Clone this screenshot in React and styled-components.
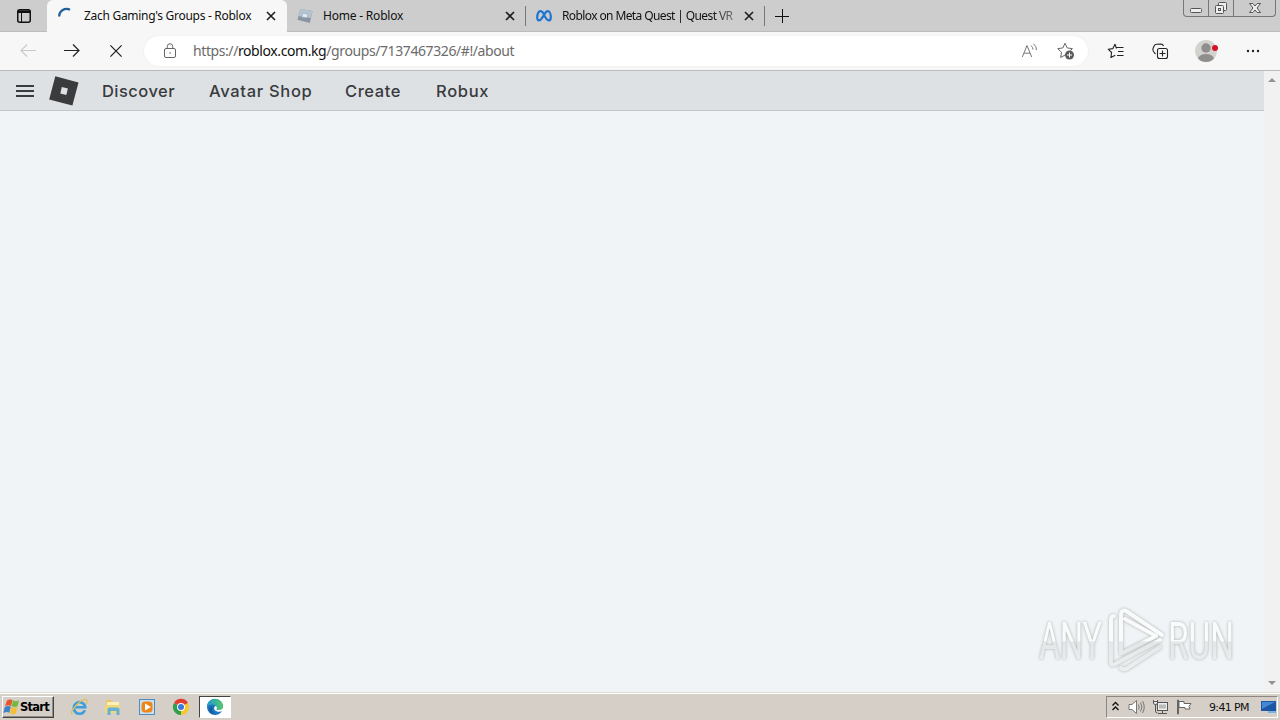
import React from 'react';
import styled, { createGlobalStyle } from 'styled-components';

const tabs = [
  { id: 'groups', title: "Zach Gaming's Groups - Roblox", icon: 'spinner', active: true, spacing: '-0.29px' },
  { id: 'home', title: 'Home - Roblox', icon: 'roblox', spacing: '-0.2px' },
  { id: 'meta', title: 'Roblox on Meta Quest | Quest VR', icon: 'meta', faded: true, spacing: '-0.61px' },
];

const navLinks = [
  { label: 'Discover', width: 107, spacing: '0.45px' },
  { label: 'Avatar Shop', width: 136, spacing: '0.68px' },
  { label: 'Create', width: 91, spacing: '0.6px' },
  { label: 'Robux', width: 60, spacing: '0.7px' },
];

const TabIcon = ({ name }) => {
  if (name === 'spinner') {
    return (
      <svg width="16" height="16" viewBox="0 0 16 16" fill="none">
        <path d="M1.2 8.500A7.500 7.500 0 0 1 12 1.700" stroke="#1f5f9c" strokeWidth="2.300" />
      </svg>
    );
  }
  if (name === 'roblox') {
    return (
      <svg width="16" height="16" viewBox="0 0 16 16">
        <path d="M3.4 1 15.6 3 12.8 15 .5 11.8Z" fill="#8795a4" />
        <path d="M3.4 1 15.6 3 13.8 10 1.500 8Z" fill="#b4c3d1" />
        <path d="M6 5.3 11 6.2 10 9.8 4.8 8.9Z" fill="#e4eaf0" stroke="#9dabb8" strokeWidth=".6" />
      </svg>
    );
  }
  return (
    <svg width="16" height="16" viewBox="0 0 16 16" fill="none">
      <path
        d="M8 6.1C6.9 4.2 5.8 3.1 4.4 3.1 2.600 3.100 1.200 6 1.200 9.300c0 2 .7 3.100 1.900 3.100C4.700 12.400 5.700 11 8 6.900 9.500 4.300 10.400 3.100 11.700 3.100c1.800 0 3.100 2.900 3.100 6.200 0 2-.7 3.100-1.900 3.100-1.700 0-2.700-1.400-4.900-5.500"
        stroke="#1f74d2"
        strokeWidth="2.200"
      />
    </svg>
  );
};

const Cross = ({ size, width }) => (
  <svg width={size} height={size} viewBox="0 0 10 10" fill="none">
    <path d="m1 1 8 8M9 1 1 9" stroke="#1c1c1c" strokeWidth={width} />
  </svg>
);

const BrowserTabs = () => (
  <TabStrip>
    <TabActions>
      <svg width="14" height="14" viewBox="0 0 14 14" fill="none" stroke="#111">
        <rect x=".75" y=".75" width="12.5" height="12.5" rx="2" strokeWidth="1.5" />
        <path d="M1 2.700h12" strokeWidth="2.600" />
        <path d="M4.500 3v10" strokeWidth="1" />
      </svg>
    </TabActions>
    {tabs.map((tab) => (
      <Tab key={tab.id} $active={tab.active}>
        <TabIcon name={tab.icon} />
        <TabTitle $faded={tab.faded} $spacing={tab.spacing}>{tab.title}</TabTitle>
        <Cross size={10} width={1.6} />
      </Tab>
    ))}
    <NewTab>
      <svg width="14" height="14" viewBox="0 0 14 14" stroke="#111" strokeWidth="1">
        <path d="M7.500 0v14M0 7.500h14" />
      </svg>
    </NewTab>
    <WindowButtons>
      <WindowButton $width={26}>
        <svg width="12" height="16" viewBox="0 0 12 16" fill="#eee" stroke="#555">
          <rect x=".5" y="8.500" width="11" height="4" rx="1" />
        </svg>
      </WindowButton>
      <WindowButton $width={25}>
        <svg width="14" height="16" viewBox="0 0 14 16" fill="#eee" stroke="#555">
          <rect x="4.500" y="2.500" width="8" height="8" rx="1" />
          <rect x="1.500" y="5.500" width="8" height="8" rx="1" />
          <rect x="4.500" y="8.500" width="2" height="2" />
        </svg>
      </WindowButton>
      <WindowButton $width={42}>
        <svg width="14" height="16" viewBox="0 0 14 16" fill="#eee" stroke="#555">
          <path d="M1.500 3.500h3.300L7 6l2.200-2.500h3.300L9 8l3.500 4.500H9.200L7 10l-2.200 2.500H1.500L5 8Z" />
        </svg>
      </WindowButton>
    </WindowButtons>
  </TabStrip>
);

const Toolbar = () => (
  <ToolbarRow>
    <ToolButton $color="#c9c9c9">
      <svg width="16" height="14" viewBox="0 0 16 14" fill="none" stroke="currentColor" strokeWidth="1.100">
        <path d="M16 6.500H1M7 .5l-6 6 6 6" />
      </svg>
    </ToolButton>
    <ToolButton>
      <svg width="16" height="14" viewBox="0 0 16 14" fill="none" stroke="currentColor" strokeWidth="1.200">
        <path d="M0 6.500h15M9 .5l6 6-6 6" />
      </svg>
    </ToolButton>
    <ToolButton>
      <Cross size={14} width={0.85} />
    </ToolButton>
    <AddressBar>
      <svg width="14" height="16" viewBox="0 0 14 16" fill="none" stroke="#666">
        <rect x="1.500" y="5.500" width="11" height="9" rx="1.500" />
        <path d="M4.250 5.500V3.500a2.750 2.750 0 0 1 5.500 0v2" />
        <circle cx="7" cy="10" r=".8" fill="#666" stroke="none" />
      </svg>
      <Url>https://<b>roblox.com.kg</b>/groups/7137467326/#!/about</Url>
      <AddressIcons>
        <svg width="17" height="16" viewBox="0 0 17 16" fill="none" stroke="#777">
          <path d="M1.300 14 6 2.500 10.700 14M2.900 10.200h6.200M10 2.600q2 1.700 2 4M12.500.8q3 2.300 3 6.300" />
        </svg>
        <svg width="18" height="18" viewBox="0 0 18 18" fill="none" stroke="#666">
          <path d="M8 13 3.700 15.500 4.500 10.300.7 6.700l5.200-.8L8 1.200l2.200 4.700 5.200.8-2.200 2" strokeLinejoin="round" />
          <circle cx="12.500" cy="13" r="4.500" fill="#5b5b5b" stroke="none" />
          <path d="M12.500 10.500v5M10 13h5" stroke="#fff" />
        </svg>
      </AddressIcons>
    </AddressBar>
    <BrowserIcons>
      <svg width="18" height="16" viewBox="0 0 18 16" fill="none" stroke="#222" strokeWidth="1.100">
        <path d="M9.500 5.500 8 1.300 5.900 5.600 1.200 6.200 4.600 9.500 3.900 14.500 8.300 12.200M9.500 4.500h7M11 8.500h5.500M10 12.500h6.500" strokeLinejoin="round" />
      </svg>
      <svg width="17" height="17" viewBox="0 0 17 17" fill="none" stroke="#222" strokeWidth="1.100">
        <path d="M3.500 11.200 1.500 8.500Q.5 7 1 5.500L2.300 2.600Q3 1.500 4.500 1.300L9 1q1.800 0 2.500 2" />
        <rect x="5.500" y="5.500" width="10" height="10" rx="2" />
        <path d="M10.500 7.500v6M7.500 10.500h6" />
      </svg>
      <svg width="24" height="22" viewBox="0 0 24 22">
        <defs>
          <clipPath id="avatar"><circle cx="11" cy="11" r="11" /></clipPath>
        </defs>
        <g clipPath="url(#avatar)">
          <rect width="22" height="22" fill="#d3d2cf" />
          <circle cx="11" cy="8" r="4.700" fill="#908e8c" />
          <ellipse cx="11" cy="19" rx="8" ry="5" fill="#908e8c" />
        </g>
        <circle cx="20" cy="8" r="3" fill="#d81324" />
      </svg>
      <svg width="14" height="4" viewBox="0 0 14 4" fill="#222">
        <circle cx="2" cy="2" r="1.200" /><circle cx="7" cy="2" r="1.200" /><circle cx="12" cy="2" r="1.200" />
      </svg>
    </BrowserIcons>
  </ToolbarRow>
);

const SiteHeader = () => (
  <Header>
    <svg width="18" height="14" viewBox="0 0 18 14" stroke="#393b3d" strokeWidth="1.800">
      <path d="M0 2h18M0 7h18M0 12h18" />
    </svg>
    <Logo>
      <svg width="30" height="30" viewBox="0 0 30 30">
        <path fillRule="evenodd" d="M6.300.3 29.500 6.500 23.400 29.600.2 23.400ZM12.800 11.100 11.300 17.500 17.300 19.100 18.900 12.600Z" fill="#393b3d" />
      </svg>
    </Logo>
    {navLinks.map((link) => (
      <NavLink key={link.label} $width={link.width} $spacing={link.spacing}>{link.label}</NavLink>
    ))}
  </Header>
);

const Watermark = () => (
  <WatermarkBox>
    <svg width="210" height="76" viewBox="0 0 210 76">
      <defs>
        <linearGradient id="shine" gradientUnits="userSpaceOnUse" x1="0" y1="14" x2="0" y2="62">
          <stop offset="0" stopColor="#f8fafa" />
          <stop offset=".54" stopColor="#fbfcfc" />
          <stop offset=".56" stopColor="#e4e7e7" />
          <stop offset="1" stopColor="#ebeeee" />
        </linearGradient>
      </defs>
      <g fill="url(#shine)" fontFamily="Roboto, sans-serif" fontSize="51">
        <text x="7" y="57.500" textLength="63" lengthAdjust="spacingAndGlyphs">ANY</text>
        <text x="136" y="57.500" textLength="66" lengthAdjust="spacingAndGlyphs">RUN</text>
      </g>
      <g fill="none" stroke="url(#shine)" strokeWidth="4" strokeLinecap="round" strokeLinejoin="round">
        <path d="M82 15q-3 0-3 4v42q0 4 4 2L128 39" />
        <path d="M130 34 95 10.500q-6-3-6 4v38L124 35 93 18" />
        <path d="M89 67q2 2 5 1l34-22" />
      </g>
    </svg>
  </WatermarkBox>
);

const launchers = [
  <svg key="ie" width="18" height="18" viewBox="0 0 18 18" fill="none">
    <path d="M14.900 12.200A5.800 5.800 0 1 1 15.300 9.300H5" stroke="#3a9fdc" strokeWidth="2.600" />
    <path d="M2 16.500C-.5 13 12.500-1 16.800 2q1 1-.6 4" stroke="#e0c05a" strokeWidth="1.300" />
  </svg>,
  <svg key="files" width="18" height="18" viewBox="0 0 18 18">
    <path d="M2 2h5l1 2h7v10H2Z" fill="#e7c766" />
    <path d="M3 4h12v6H3Z" fill="#fcf1b2" />
    <path d="M1 7h15v8H1Z" fill="#efd77b" />
    <path d="M3.500 17v-5.500q0-2 2-2h8q2 0 2 2V17h-3v-4h-6v4Z" fill="#68afd7" />
  </svg>,
  <svg key="media" width="18" height="18" viewBox="0 0 18 18">
    <rect x="1.500" y="1.500" width="15" height="15" fill="#c6e1f3" stroke="#538cba" />
    <rect x="3.500" y="3.500" width="11" height="11" rx="3.500" fill="#ef8517" />
    <path d="m7 5.500 6 3.500-6 3.500Z" fill="#fff" />
  </svg>,
  <svg key="chrome" width="18" height="18" viewBox="0 0 18 18">
    <path d="M9 9 2 5a8 8 0 0 1 14 0Z" fill="#df3e30" />
    <path d="M9 9 16 5A8 8 0 0 1 9 17Z" fill="#f7c72e" />
    <path d="M9 9v8A8 8 0 0 1 2 5Z" fill="#2f9e4d" />
    <circle cx="9" cy="9" r="4" fill="#fff" />
    <circle cx="9" cy="9" r="3" fill="#3979dc" />
  </svg>,
];

const EdgeIcon = () => (
  <svg width="18" height="18" viewBox="0 0 18 18">
    <defs>
      <linearGradient id="edge" x1="0" x2="1">
        <stop stopColor="#2196d8" />
        <stop offset="1" stopColor="#55ca63" />
      </linearGradient>
    </defs>
    <circle cx="9" cy="9" r="8" fill="#1976bf" />
    <path d="M1 9a8 8 0 0 1 16-.5c0 2.500-2 3.700-4.500 3.500-2.500 0-1.500-1.500-1.700-3C10.200 6.500 4.500 5 1 9Z" fill="url(#edge)" />
    <path d="M6.500 8.500Q5 13.500 9.500 16.500 3 15.500 3 11 3 8.500 6.500 8.500Z" fill="#135ba3" />
    <path d="M9 8q-2.500 4 2 5.500 2.500.8 5.500-.5l1 1.500.5-6-1 1.500q-1.500 2.200-4.500 2-2.500 0-1.700-1.500Q11.500 8 9 8Z" fill="#fff" />
  </svg>
);

const Taskbar = () => (
  <TaskbarRow>
    <StartButton>
      <svg width="17" height="16" viewBox="0 0 17 16">
        <path d="M4 1.500Q6.500-.3 9.500 1L8 7Q5 5.500 2 7.300Z" fill="#e5562c" />
        <path d="M10 1.300q3 1.700 6 0l-1.500 6q-3 1.600-6 0Z" fill="#75b83e" />
        <path d="M1.800 8q3-1.800 6-.3L6.300 13.700q-3-1.500-6 .5Z" fill="#3c83cb" />
        <path d="M8.400 8q3 1.500 6 0l-1.500 6.500q-3 1.500-6 0Z" fill="#f4bf35" />
      </svg>
      Start
    </StartButton>
    <Launchers>{launchers}</Launchers>
    <ActiveTask><EdgeIcon /></ActiveTask>
    <Tray>
      <svg width="7" height="10" viewBox="0 0 7 10" fill="none" stroke="#111" strokeWidth="1.300">
        <path d="M.5 3.500 3.500.5l3 3M.5 8l3-3 3 3" />
      </svg>
      <TrayIcons>
        <svg width="17" height="16" viewBox="0 0 17 16" fill="none" stroke="#777">
          <path d="M1 5.500h3L8.500 1.500v13L4 10.500H1Z" fill="#fff" />
          <path d="M10.500 5.500q1.500 2.500 0 5M12.500 3.500q3 4.500 0 9M14.500 2q3.500 6 0 12" />
        </svg>
        <svg width="17" height="16" viewBox="0 0 17 16" fill="#eee" stroke="#555">
          <rect x="5.500" y="3.500" width="10" height="8" />
          <path d="M7 5.500h7v4H7Z" fill="#bbb" stroke="none" />
          <path d="M6 14.500h9M10.500 12v2M3.500 5v7q0 2 2 2" fill="none" />
          <path d="M1.500 1v3q0 1.500 2 1.500t2-1.500V1M1 2.500h5" />
        </svg>
        <svg width="17" height="16" viewBox="0 0 17 16" fill="#fff" stroke="#666">
          <path d="M1.500 1v14h1V1ZM3 2.500h5v2h7L13 7.500l1 2.500H9V8.500H3Z" />
        </svg>
      </TrayIcons>
      <Clock>9:41 PM</Clock>
      <svg width="16" height="14" viewBox="0 0 16 14">
        <path d="M0 1h15v10H0Z" fill="#1c56a5" />
        <path d="M1 2h13L1 9Z" fill="#4388d2" />
        <path d="M7 11h8v2H7Z" fill="#7ab2df" />
      </svg>
    </Tray>
  </TaskbarRow>
);

const App = () => (
  <Desktop>
    <GlobalStyle />
    <BrowserTabs />
    <Toolbar />
    <Viewport>
      <Page>
        <SiteHeader />
        <Watermark />
      </Page>
      <Scrollbar>
        <svg width="8" height="4" viewBox="0 0 8 4" fill="#929292"><path d="m4 0 4 4H0Z" /></svg>
        <svg width="8" height="4" viewBox="0 0 8 4" fill="#929292"><path d="M0 0h8L4 4Z" /></svg>
      </Scrollbar>
    </Viewport>
    <Taskbar />
  </Desktop>
);

const GlobalStyle = createGlobalStyle`
  * {
    box-sizing: border-box;
  }

  body {
    margin: 0;
    overflow: hidden;
  }

  svg {
    display: block;
    flex-shrink: 0;
    overflow: visible;
  }
`;

const Desktop = styled.div`
  display: flex;
  flex-direction: column;
  width: 1280px;
  height: 720px;
  font-family: 'Noto Sans', sans-serif;
  background: #f0f4f7;
`;

const TabStrip = styled.div`
  display: flex;
  height: 32px;
  background: #cdcdcd;
`;

const TabActions = styled.div`
  display: flex;
  align-items: center;
  width: 47px;
  padding-left: 17px;
  border-bottom: 1px solid #bcbcbc;
`;

const Tab = styled.div`
  display: flex;
  align-items: center;
  width: ${({ $active }) => ($active ? '240px' : '239px')};
  padding: 0 11px 0 ${({ $active }) => ($active ? '11px' : '10px')};
  background: ${({ $active }) => ($active ? '#f7f7f7' : 'transparent')};
  border-radius: ${({ $active }) => ($active ? '6px 6px 0 0' : '0')};
  border-bottom: 1px solid ${({ $active }) => ($active ? '#f7f7f7' : '#bcbcbc')};
  ${({ $active }) => !$active && `
    background: linear-gradient(#777, #777) right 6px / 1px 20px no-repeat;
  `}
`;

const TabTitle = styled.span`
  flex: 1;
  height: 18px;
  margin: 0 10px;
  color: #111;
  font-size: 12px;
  line-height: 18px;
  letter-spacing: ${({ $spacing }) => $spacing};
  white-space: nowrap;
  mask-image: ${({ $faded }) => ($faded ? 'linear-gradient(to right, #000 150px, transparent 190px)' : 'none')};
`;

const NewTab = styled.div`
  display: flex;
  flex: 1;
  align-items: center;
  padding-left: 10px;
  border-bottom: 1px solid #bcbcbc;
`;

const WindowButtons = styled.div`
  display: flex;
  align-items: flex-start;
  padding-right: 4px;
  border-bottom: 1px solid #bcbcbc;
`;

const WindowButton = styled.div`
  display: flex;
  justify-content: center;
  width: ${({ $width }) => $width}px;
  height: 17px;
  background: #cbcbcb;
  border: 1px solid #777;
  border-width: 0 1px 1px 0;

  &:first-child {
    border-left-width: 1px;
    border-bottom-left-radius: 4px;
  }

  &:last-child {
    border-bottom-right-radius: 4px;
  }
`;

const ToolbarRow = styled.div`
  display: flex;
  align-items: center;
  height: 39px;
  padding-left: 6px;
  background: #f7f7f7;
  border-bottom: 1px solid #b9babb;
`;

const ToolButton = styled.div`
  display: flex;
  justify-content: center;
  width: 44px;
  color: ${({ $color }) => $color || '#222'};
`;

const AddressBar = styled.div`
  display: flex;
  align-items: center;
  width: 944px;
  height: 30px;
  margin-left: 6px;
  padding: 0 13px 0 19px;
  background: #fff;
  border-radius: 15px;
  box-shadow: 0 0 2px #e6e6e6;
`;

const Url = styled.span`
  flex: 1;
  margin-left: 16px;
  color: #6b6b6b;
  font-size: 14px;
  line-height: 20px;
  letter-spacing: -0.41px;

  b {
    color: #111;
    font-weight: 400;
  }
`;

const AddressIcons = styled.div`
  display: flex;
  align-items: center;
  gap: 19px;
`;

const BrowserIcons = styled.div`
  display: flex;
  align-items: center;
  gap: 26.5px;
  margin-left: 19px;
`;

const Viewport = styled.div`
  display: flex;
  flex: 1;
`;

const Page = styled.main`
  position: relative;
  flex: 1;
`;

const Header = styled.header`
  display: flex;
  align-items: center;
  height: 40px;
  padding-left: 16px;
  background: #dde1e4;
  border-bottom: 1px solid #c5c8ca;
`;

const Logo = styled.div`
  margin: 0 23px 0 15px;
`;

const NavLink = styled.a`
  width: ${({ $width }) => $width}px;
  color: #393b3d;
  font-family: Inter, sans-serif;
  font-size: 16.5px;
  font-weight: 500;
  letter-spacing: ${({ $spacing }) => $spacing};
  white-space: nowrap;
`;

const WatermarkBox = styled.div`
  position: absolute;
  right: 22px;
  bottom: 15px;
  filter: drop-shadow(0 0 1.5px #a9adad);
`;

const Scrollbar = styled.div`
  display: flex;
  flex-direction: column;
  align-items: center;
  justify-content: space-between;
  width: 16px;
  padding: 7px 0 7px;
  background: #f1f1f1;
`;

const TaskbarRow = styled.footer`
  display: flex;
  align-items: center;
  height: 28px;
  padding: 1px 2px 0;
  background: #d5cfc7;
  border-top: 1px solid #dedbd7;
  box-shadow: inset 0 1px #fff;
`;

const StartButton = styled.div`
  display: flex;
  align-items: center;
  width: 52px;
  height: 22px;
  border: 1px solid;
  border-color: #fff #444 #444 #fff;
  box-shadow: inset -1px -1px #918d87;
  color: #000;
  font-family: 'DejaVu Sans', sans-serif;
  font-size: 11.5px;
  font-weight: 700;
  letter-spacing: -0.75px;
`;

const Launchers = styled.div`
  display: flex;
  gap: 16px;
  margin-left: 16px;
`;

const ActiveTask = styled.div`
  display: flex;
  align-items: center;
  justify-content: center;
  width: 32px;
  height: 22px;
  margin-left: 9px;
  background: #fff;
  border: 1px solid;
  border-color: #444 #fff #fff #444;
`;

const Tray = styled.div`
  display: flex;
  align-items: center;
  width: 172px;
  height: 22px;
  margin-left: auto;
  padding-left: 5px;
  border: 1px solid;
  border-color: #8c8780 #fff #fff #8c8780;
`;

const TrayIcons = styled.div`
  display: flex;
  gap: 7px;
  margin-left: 9px;
`;

const Clock = styled.span`
  flex: 1;
  margin-left: 16px;
  color: #111;
  font-family: 'DejaVu Sans', sans-serif;
  font-size: 11px;
  letter-spacing: -0.65px;
  white-space: nowrap;
`;

export default App;
